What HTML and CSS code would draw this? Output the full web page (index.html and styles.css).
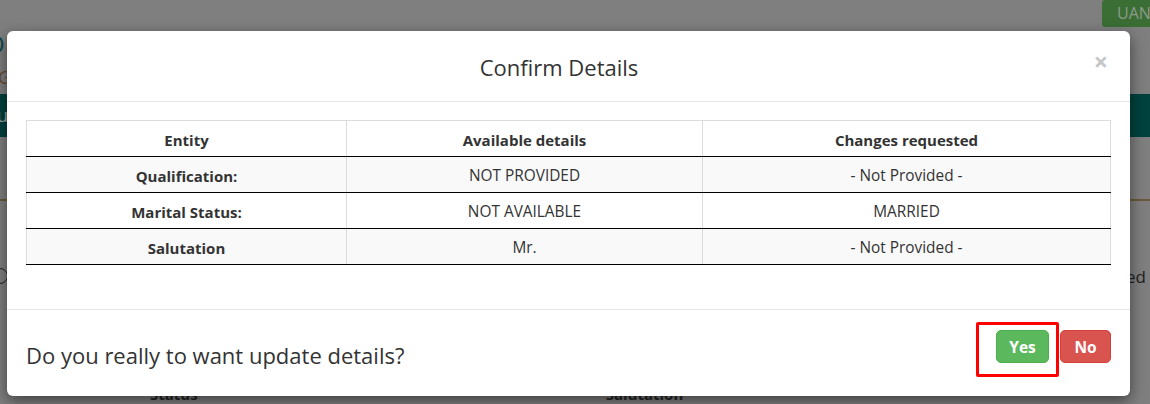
FILE: index.html
```html
<!DOCTYPE html>
<html>
<head>
<meta charset="utf-8">
<link rel="stylesheet" href="styles.css">
</head>
<body>
<div class="page">
  <div class="topbar"><span class="uan-btn">UAN</span></div>
  <div class="page-title">OD</div>
  <div class="page-sub">G</div>
  <div class="tealbar"><span class="tab">u</span></div>
  <div class="spacer1"></div>
  <div class="rule"></div>
  <div class="midrow">
    <span class="radio"></span>
    <span class="req">Requested</span>
  </div>
  <div class="bottomrow">
    <span class="lbl lbl-status">Status</span>
    <span class="lbl lbl-sal">Salutation</span>
  </div>
</div>

<div class="modal">
  <div class="modal-header">
    <h4 class="modal-title">Confirm Details</h4>
    <span class="close">&times;</span>
  </div>
  <div class="modal-body">
    <table class="details">
      <thead>
        <tr><th>Entity</th><th>Available details</th><th>Changes requested</th></tr>
      </thead>
      <tbody>
        <tr class="odd"><th>Qualification:</th><td>NOT PROVIDED</td><td>- Not Provided -</td></tr>
        <tr><th>Marital Status:</th><td>NOT AVAILABLE</td><td>MARRIED</td></tr>
        <tr class="odd"><th>Salutation</th><td>Mr.</td><td>- Not Provided -</td></tr>
      </tbody>
    </table>
  </div>
  <div class="modal-footer">
    <span class="question">Do you really to want update details?</span>
    <div class="actions">
      <span class="highlight"><button class="btn btn-yes">Yes</button></span>
      <button class="btn btn-no">No</button>
    </div>
  </div>
</div>
</body>
</html>
```
FILE: styles.css
```css
html, body {
  margin: 0;
  padding: 0;
  width: 1150px;
  height: 404px;
  overflow: hidden;
  background: #7f7f7f;
  font-family: "Open Sans", "Noto Sans", sans-serif;
  color: #333;
}

.page {
  display: flex;
  flex-direction: column;
  height: 404px;
}

.topbar {
  display: flex;
  justify-content: flex-end;
  height: 27px;
}

.uan-btn {
  display: block;
  width: 48px;
  height: 27px;
  background: #3b6e35;
  border-radius: 3px 0 0 3px;
  color: #8c9a8a;
  font-size: 16px;
  line-height: 27px;
  padding-left: 15px;
  box-sizing: border-box;
}

.page-title {
  margin-left: -14px;
  margin-top: 2px;
  height: 30px;
  font-size: 24px;
  line-height: 30px;
  color: #0c4a50;
}

.page-sub {
  margin-left: -2px;
  margin-top: 6px;
  height: 22px;
  font-size: 18px;
  color: #6a4a30;
}

.tealbar {
  margin-top: 7px;
  height: 43px;
  background: #01423e;
  color: #9aa6a4;
  font-size: 18px;
  line-height: 43px;
}

.tealbar .tab {
  margin-left: -3px;
}

.spacer1 {
  height: 78px;
}

.rule {
  height: 2px;
  background: #6a5a3a;
}

.midrow {
  display: flex;
  justify-content: space-between;
  align-items: center;
  margin-top: 65px;
  height: 20px;
}

.radio {
  width: 14px;
  height: 14px;
  border: 1px solid #222;
  border-radius: 50%;
  margin-left: -8px;
}

.req {
  font-size: 17px;
  color: #1e1e1e;
  margin-right: 4px;
}

.bottomrow {
  display: flex;
  margin-top: 98px;
  font-size: 15px;
  font-weight: 700;
  color: #262626;
}

.lbl-status { margin-left: 150px; }
.lbl-sal { margin-left: 408px; }

/* modal overlay */
.modal {
  position: absolute;
  left: 7px;
  top: 31px;
  width: 1123px;
  height: 365px;
  background: #fff;
  border-radius: 6px;
  box-shadow: 0 5px 15px rgba(0, 0, 0, 0.5);
  display: flex;
  flex-direction: column;
}

.modal-header {
  position: relative;
  height: 70px;
  border-bottom: 1px solid #e5e5e5;
  display: flex;
  align-items: center;
  justify-content: center;
  padding-right: 19px;
}

.modal-title {
  margin: 0;
  font-size: 22px;
  font-weight: 400;
  color: #333;
  padding-top: 2px;
}

.close {
  position: absolute;
  right: 22px;
  top: 16px;
  font-size: 25px;
  font-weight: 700;
  color: #c6c6c6;
  line-height: 28px;
}

.modal-body {
  height: 189px;
  padding: 18px 19px 0;
}

.details {
  width: 1085px;
  border-collapse: collapse;
  border: 1px solid #ddd;
  font-size: 15px;
}

.details th,
.details td {
  height: 33px;
  padding: 2px 8px 0;
  text-align: center;
  border-left: 1px solid #ddd;
  border-right: 1px solid #ddd;
  border-bottom: 1px solid #000;
  color: #333;
}

.details td {
  font-size: 15.4px;
}

.details th {
  font-weight: 700;
}

.details thead th:first-child,
.details tbody th {
  width: 303px;
}

.details thead th:nth-child(2) {
  width: 339px;
}

.details tbody tr.odd th,
.details tbody tr.odd td {
  background: #f9f9f9;
}

.modal-footer {
  flex: 1;
  border-top: 1px solid #e5e5e5;
  display: flex;
  align-items: center;
  justify-content: space-between;
  padding: 0 19px;
}

.question {
  font-size: 22px;
  color: #333;
  padding-top: 4px;
}

.actions {
  display: flex;
  align-items: flex-start;
  margin-bottom: 7px;
}

.highlight {
  display: block;
  border: 3px solid #ff0000;
  border-radius: 2px;
  padding: 5px 7px 11px 17px;
}

.btn {
  font-family: "Open Sans", "Noto Sans", sans-serif;
  font-weight: 700;
  font-size: 15.5px;
  color: #fff;
  border-radius: 5px;
  height: 33px;
  padding: 0;
  display: block;
  cursor: pointer;
}

.btn-yes {
  width: 53px;
  background: #5cb85c;
  border: 1px solid #4cae4c;
}

.btn-no {
  width: 51px;
  margin-left: 1px;
  margin-top: 8px;
  background: #d9534f;
  border: 1px solid #d43f3a;
}
```
